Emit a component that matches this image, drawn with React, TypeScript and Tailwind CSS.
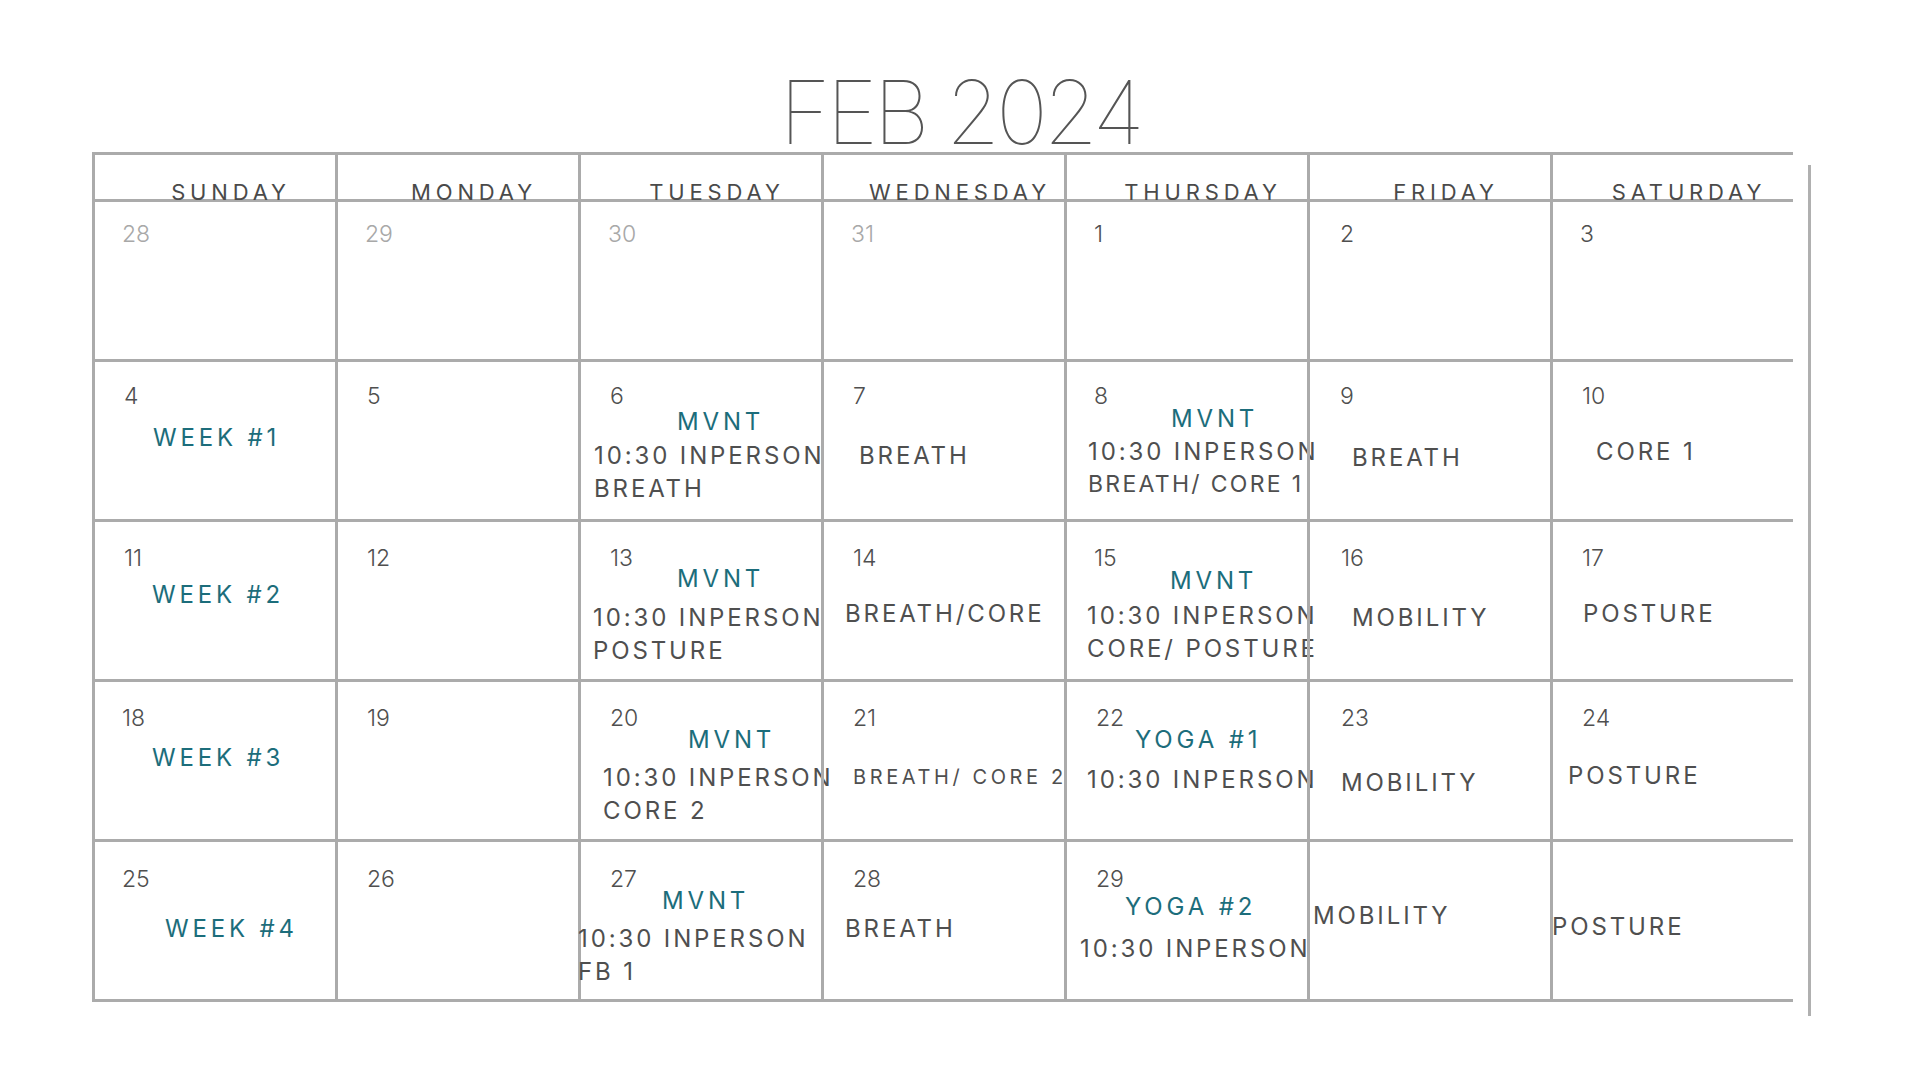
import React from 'react';

type Tone = 'num' | 'prev' | 'teal' | 'dark' | 'tight' | 'small';
type Item = { text: string; tone: Tone; cls: string };

const tones: Record<Tone, string> = {
  num: 'text-[23px] font-light text-[#4f4f4f]',
  prev: 'text-[23px] font-light text-[#a8a8a8]',
  teal: 'text-[24px] tracking-[0.16em] text-[#1c6d7b]',
  dark: 'text-[24px] tracking-[0.12em] text-[#4f4f4f]',
  tight: 'text-[23px] tracking-[0.1em] text-[#4f4f4f]',
  small: 'text-[20px] tracking-[0.18em] text-[#4f4f4f]',
};

const days = ['SUNDAY', 'MONDAY', 'TUESDAY', 'WEDNESDAY', 'THURSDAY', 'FRIDAY', 'SATURDAY'];

// each cell is a list of lines, placed by margins so the hand-made offsets survive
const weeks: Item[][][] = [
  [
    [{ text: '28', tone: 'prev', cls: 'ml-[27px] mt-[18px]' }],
    [{ text: '29', tone: 'prev', cls: 'ml-[27px] mt-[18px]' }],
    [{ text: '30', tone: 'prev', cls: 'ml-[27px] mt-[18px]' }],
    [{ text: '31', tone: 'prev', cls: 'ml-[27px] mt-[18px]' }],
    [{ text: '1', tone: 'num', cls: 'ml-[27px] mt-[18px]' }],
    [{ text: '2', tone: 'num', cls: 'ml-[30px] mt-[18px]' }],
    [{ text: '3', tone: 'num', cls: 'ml-[27px] mt-[18px]' }],
  ],
  [
    [
      { text: '4', tone: 'num', cls: 'ml-[29px] mt-[20px]' },
      { text: 'WEEK #1', tone: 'teal', cls: 'ml-[58px] mt-[14px]' },
    ],
    [{ text: '5', tone: 'num', cls: 'ml-[29px] mt-[20px]' }],
    [
      { text: '6', tone: 'num', cls: 'ml-[29px] mt-[20px]' },
      { text: 'MVNT', tone: 'teal', cls: 'ml-[96px] mt-[-2px]' },
      { text: '10:30 INPERSON', tone: 'dark', cls: 'ml-[13px] mt-[6px]' },
      { text: 'BREATH', tone: 'dark', cls: 'ml-[13px] mt-[5px]' },
    ],
    [
      { text: '7', tone: 'num', cls: 'ml-[29px] mt-[20px]' },
      { text: 'BREATH', tone: 'dark', cls: 'ml-[35px] mt-[32px]' },
    ],
    [
      { text: '8', tone: 'num', cls: 'ml-[27px] mt-[20px]' },
      { text: 'MVNT', tone: 'teal', cls: 'ml-[104px] mt-[-5px]' },
      { text: '10:30 INPERSON', tone: 'dark', cls: 'ml-[21px] mt-[5px]' },
      { text: 'BREATH/ CORE 1', tone: 'tight', cls: 'ml-[21px] mt-[4px]' },
    ],
    [
      { text: '9', tone: 'num', cls: 'ml-[30px] mt-[20px]' },
      { text: 'BREATH', tone: 'dark', cls: 'ml-[42px] mt-[34px]' },
    ],
    [
      { text: '10', tone: 'num', cls: 'ml-[29px] mt-[20px]' },
      { text: 'CORE 1', tone: 'dark', cls: 'ml-[43px] mt-[28px]' },
    ],
  ],
  [
    [
      { text: '11', tone: 'num', cls: 'ml-[29px] mt-[22px]' },
      { text: 'WEEK #2', tone: 'teal', cls: 'ml-[57px] mt-[9px]' },
    ],
    [{ text: '12', tone: 'num', cls: 'ml-[29px] mt-[22px]' }],
    [
      { text: '13', tone: 'num', cls: 'ml-[29px] mt-[22px]' },
      { text: 'MVNT', tone: 'teal', cls: 'ml-[96px] mt-[-7px]' },
      { text: '10:30 INPERSON', tone: 'dark', cls: 'ml-[12px] mt-[11px]' },
      { text: 'POSTURE', tone: 'dark', cls: 'ml-[12px] mt-[5px]' },
    ],
    [
      { text: '14', tone: 'num', cls: 'ml-[29px] mt-[22px]' },
      { text: 'BREATH/CORE', tone: 'dark', cls: 'ml-[21px] mt-[28px]' },
    ],
    [
      { text: '15', tone: 'num', cls: 'ml-[27px] mt-[22px]' },
      { text: 'MVNT', tone: 'teal', cls: 'ml-[103px] mt-[-5px]' },
      { text: '10:30 INPERSON', tone: 'dark', cls: 'ml-[20px] mt-[7px]' },
      { text: 'CORE/ POSTURE', tone: 'dark', cls: 'ml-[20px] mt-[5px]' },
    ],
    [
      { text: '16', tone: 'num', cls: 'ml-[31px] mt-[22px]' },
      { text: 'MOBILITY', tone: 'dark', cls: 'ml-[42px] mt-[32px]' },
    ],
    [
      { text: '17', tone: 'num', cls: 'ml-[29px] mt-[22px]' },
      { text: 'POSTURE', tone: 'dark', cls: 'ml-[30px] mt-[28px]' },
    ],
  ],
  [
    [
      { text: '18', tone: 'num', cls: 'ml-[27px] mt-[22px]' },
      { text: 'WEEK #3', tone: 'teal', cls: 'ml-[57px] mt-[12px]' },
    ],
    [{ text: '19', tone: 'num', cls: 'ml-[29px] mt-[22px]' }],
    [
      { text: '20', tone: 'num', cls: 'ml-[29px] mt-[22px]' },
      { text: 'MVNT', tone: 'teal', cls: 'ml-[107px] mt-[-6px]' },
      { text: '10:30 INPERSON', tone: 'dark', cls: 'ml-[22px] mt-[10px]' },
      { text: 'CORE 2', tone: 'dark', cls: 'ml-[22px] mt-[5px]' },
    ],
    [
      { text: '21', tone: 'num', cls: 'ml-[29px] mt-[22px]' },
      { text: 'BREATH/ CORE 2', tone: 'small', cls: 'ml-[29px] mt-[31px]' },
    ],
    [
      { text: '22', tone: 'num', cls: 'ml-[29px] mt-[22px]' },
      { text: 'YOGA #1', tone: 'teal', cls: 'ml-[68px] mt-[-6px]' },
      { text: '10:30 INPERSON', tone: 'dark', cls: 'ml-[20px] mt-[12px]' },
    ],
    [
      { text: '23', tone: 'num', cls: 'ml-[31px] mt-[22px]' },
      { text: 'MOBILITY', tone: 'dark', cls: 'ml-[31px] mt-[37px]' },
    ],
    [
      { text: '24', tone: 'num', cls: 'ml-[29px] mt-[22px]' },
      { text: 'POSTURE', tone: 'dark', cls: 'ml-[15px] mt-[30px]' },
    ],
  ],
  [
    [
      { text: '25', tone: 'num', cls: 'ml-[27px] mt-[23px]' },
      { text: 'WEEK #4', tone: 'teal', cls: 'ml-[70px] mt-[22px]' },
    ],
    [{ text: '26', tone: 'num', cls: 'ml-[29px] mt-[23px]' }],
    [
      { text: '27', tone: 'num', cls: 'ml-[29px] mt-[23px]' },
      { text: 'MVNT', tone: 'teal', cls: 'ml-[81px] mt-[-6px]' },
      { text: '10:30 INPERSON', tone: 'dark', cls: 'ml-[-3px] mt-[10px]' },
      { text: 'FB 1', tone: 'dark', cls: 'ml-[-3px] mt-[5px]' },
    ],
    [
      { text: '28', tone: 'num', cls: 'ml-[29px] mt-[23px]' },
      { text: 'BREATH', tone: 'dark', cls: 'ml-[21px] mt-[22px]' },
    ],
    [
      { text: '29', tone: 'num', cls: 'ml-[29px] mt-[23px]' },
      { text: 'YOGA #2', tone: 'teal', cls: 'ml-[58px] mt-[0px]' },
      { text: '10:30 INPERSON', tone: 'dark', cls: 'ml-[13px] mt-[14px]' },
    ],
    [{ text: 'MOBILITY', tone: 'dark', cls: 'ml-[3px] mt-[60px]' }],
    [{ text: 'POSTURE', tone: 'dark', cls: 'ml-[-1px] mt-[71px]' }],
  ],
];

export default function App() {
  return (
    <div className="w-[1920px] h-[1080px] overflow-hidden bg-white pt-[68px] font-['Inter','Liberation_Sans',sans-serif]">
      <h1 className="h-[84px] text-center text-[88px] leading-none font-thin tracking-[-0.05em] text-[#555555]">
        FEB 2024
      </h1>

      <div className="ml-[92px] flex items-start">
        <div className="grid w-[1701px] grid-cols-[repeat(7,243px)] grid-rows-[47px_repeat(5,160px)] border-t-[3px] border-[#ababab]">
          {days.map((d) => (
            <div
              key={d}
              className="flex h-[47px] items-end justify-center overflow-visible border-b-[3px] border-l-[3px] border-[#ababab] pl-[32px]"
            >
              <span className="mb-[-4px] text-[22px] leading-none tracking-[0.22em] text-[#4a4a4a]">
                {d}
              </span>
            </div>
          ))}

          {weeks.map((week, wi) =>
            week.map((cell, ci) => (
              <div
                key={`${wi}-${ci}`}
                className="flex h-[160px] flex-col items-start overflow-visible border-b-[3px] border-l-[3px] border-[#ababab]"
              >
                {cell.map((item) => (
                  <div
                    key={item.text}
                    className={`h-[28px] whitespace-nowrap leading-[28px] ${tones[item.tone]} ${item.cls}`}
                  >
                    {item.text}
                  </div>
                ))}
              </div>
            ))
          )}
        </div>

        <div className="ml-[15px] mt-[13px] h-[851px] w-[3px] bg-[#b0b0b0]" />
      </div>
    </div>
  );
}
